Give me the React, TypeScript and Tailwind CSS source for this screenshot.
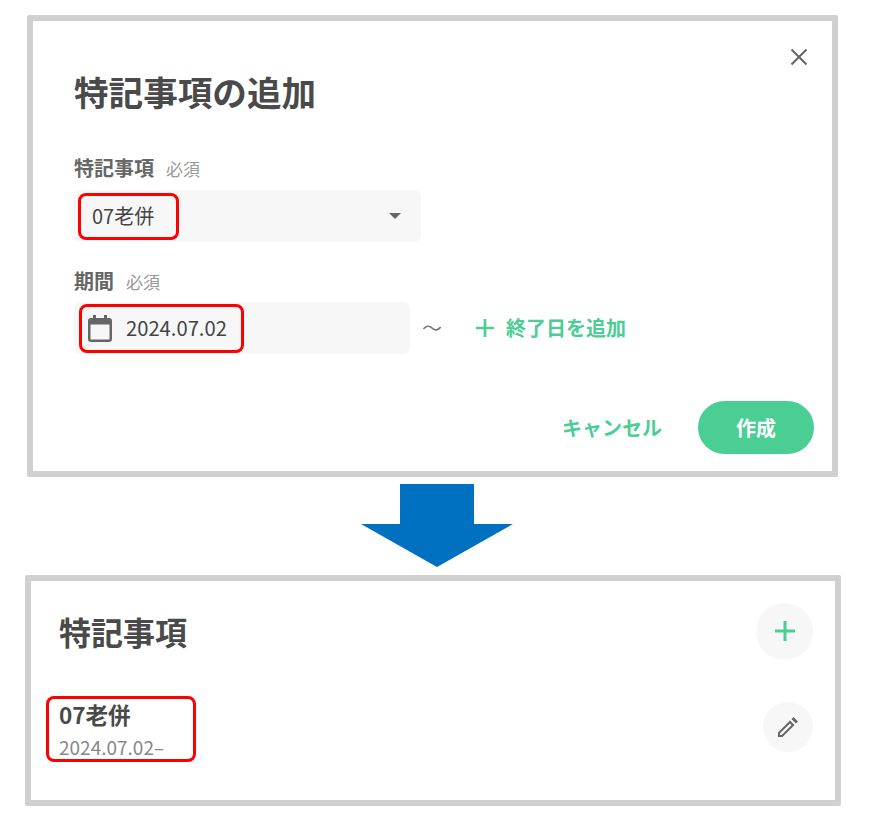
import * as React from 'react';

const font = { fontFamily: '"Noto Sans CJK JP", "Noto Sans", sans-serif' };

// Red annotation frame laid over the screenshot content
const RedFrame = ({ className }: { className: string }) => (
  <div className={`absolute rounded-[8px] border-[3px] border-[#ff0000] ${className}`} />
);

const Label = ({ text }: { text: string }) => (
  <div className="flex items-baseline gap-3 h-[28px] leading-[28px]">
    <span className="text-[20px] font-bold text-[#666666]">{text}</span>
    <span className="text-[17px] text-[#999999]">必須</span>
  </div>
);

const PlusIcon = ({ size }: { size: number }) => (
  <svg width={size} height={size} viewBox="0 0 20 20" fill="none" stroke="#4ace94" strokeWidth="3">
    <path d="M10 0v20M0 10h20" />
  </svg>
);

const CalendarIcon = () => (
  <svg width="24" height="27" viewBox="0 0 24 27" fill="#666666">
    <path d="M5 0h3v3h8V0h3v3h2a3 3 0 0 1 3 3v18a3 3 0 0 1-3 3H3a3 3 0 0 1-3-3V6a3 3 0 0 1 3-3h2zM2.500 9.500V24a.5.5 0 0 0 .5.5h18a.5.5 0 0 0 .5-.5V9.500z" />
  </svg>
);

const AddDialog = () => (
  <div className="relative ml-[27px] h-[462px] w-[811px] rounded-[2px] border-[6px] border-[#d0d0d0] bg-white pl-[41px]">
    <button className="absolute right-[24px] top-[27px]">
      <svg width="18" height="18" viewBox="0 0 18 18" stroke="#666666" strokeWidth="2" fill="none">
        <path d="M1.500 1.500l15 15M16.500 1.500l-15 15" />
      </svg>
    </button>
    <h1 className="pt-[46px] text-[34.6px] font-bold leading-[48px] text-[#4a4a4a]">特記事項の追加</h1>

    <div className="mt-[39px]">
      <Label text="特記事項" />
      <div className="relative mt-[8px] flex h-[52px] w-[347px] items-center justify-between rounded-[6px] bg-[#f7f7f7] pl-[18px] pr-[20px]">
        <span className="text-[20px] text-[#444444]">07老併</span>
        <span className="h-0 w-0 border-x-[6px] border-t-[6px] border-x-transparent border-t-[#666666]" />
        <RedFrame className="left-[4px] top-[3px] h-[47px] w-[101px]" />
      </div>
    </div>

    <div className="mt-[25px]">
      <Label text="期間" />
      <div className="mt-[7px] flex items-center">
        <div className="relative flex h-[52px] w-[336px] items-center rounded-[6px] bg-[#f7f7f7] pl-[14px]">
          <CalendarIcon />
          <span className="ml-[14px] text-[20.2px] text-[#444444]">2024.07.02</span>
          <RedFrame className="left-[5px] top-[2px] h-[49px] w-[165px]" />
        </div>
        <span className="ml-[12px] text-[20px] text-[#777777]">～</span>
        <button className="ml-[34px] flex items-center gap-[12px] text-[20px] font-bold text-[#4ace94]">
          <PlusIcon size={18} />
          終了日を追加
        </button>
      </div>
    </div>

    <div className="absolute bottom-[17px] right-[18px] flex items-center gap-[36px]">
      <button className="text-[20px] font-bold text-[#4ace94]">キャンセル</button>
      <button className="h-[53px] w-[116px] rounded-full bg-[#4ace94] text-[20px] font-bold text-white">作成</button>
    </div>
  </div>
);

const DownArrow = () => (
  <svg className="ml-[361px] mt-[7px] block" width="152" height="83" viewBox="0 0 152 83" fill="#0070c0">
    <path d="M39 0h74v40h39L76 83 0 40h39z" />
  </svg>
);

const NotesCard = () => (
  <div className="ml-[25px] mt-[8px] h-[231px] w-[816px] rounded-[2px] border-[6px] border-[#d0d0d0] bg-white pl-[28px] pr-[22px]">
    <div className="flex items-center justify-between pt-[21px]">
      <h2 className="text-[32px] font-bold leading-[58px] text-[#4a4a4a]">特記事項</h2>
      <button className="flex h-[57px] w-[57px] items-center justify-center rounded-full bg-[#f7f7f7]">
        <PlusIcon size={20} />
      </button>
    </div>
    <div className="relative mt-[39px] flex items-start justify-between">
      <div>
        <div className="text-[22.5px] font-bold leading-[30px] text-[#4a4a4a]">07老併</div>
        <div className="mt-[3px] text-[19px] leading-[30px] text-[#888888]">2024.07.02–</div>
      </div>
      <button className="mt-[3px] flex h-[50px] w-[50px] items-center justify-center rounded-full bg-[#f7f7f7]">
        <svg width="20" height="20" viewBox="0 0 20 20" fill="#666666">
          <path d="M0 20v-4.500L12 3.500 16.500 8 4.500 20zM2 18h1.700L13.600 8 12 6.400 2 16.300zM13.400 2.100L15.500 0 20 4.500 17.900 6.600z" />
        </svg>
      </button>
      <RedFrame className="-left-[13px] -top-[3px] h-[66px] w-[150px]" />
    </div>
  </div>
);

export default function App() {
  return (
    <div className="h-[825px] w-[873px] overflow-hidden bg-white pt-[15px]" style={font}>
      <AddDialog />
      <DownArrow />
      <NotesCard />
    </div>
  );
}
